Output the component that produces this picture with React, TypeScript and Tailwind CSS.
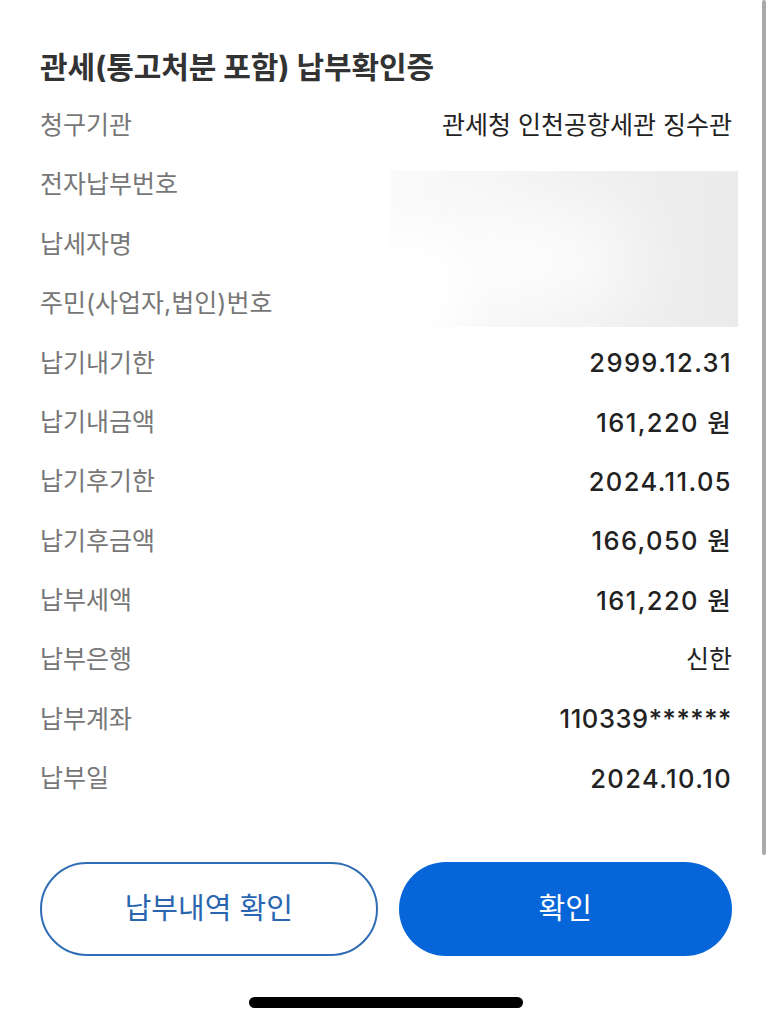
import React from 'react'

const rowsTop = [{ label: '청구기관', value: '관세청 인천공항세관 징수관' }]
const hidden = ['전자납부번호', '납세자명', '주민(사업자,법인)번호']
const rowsBottom = [
    { label: '납기내기한', value: '2999.12.31' },
    { label: '납기내금액', value: '161,220 원' },
    { label: '납기후기한', value: '2024.11.05' },
    { label: '납기후금액', value: '166,050 원' },
    { label: '납부세액', value: '161,220 원' },
    { label: '납부은행', value: '신한' },
    { label: '납부계좌', value: '110339******' },
    { label: '납부일', value: '2024.10.10' },
]

function Row({ label, value, plain }: { label: string; value: string; plain?: boolean }) {
    return (
        <div className="flex h-[59.4px] items-center justify-between">
            <span className="text-[25px] text-[#777]">{label}</span>
            {plain ? (
                <span className="text-[25px] text-[#222]">{value}</span>
            ) : value.includes('*') ? (
                <span className="text-[25.5px] font-medium tracking-[0.6px] text-[#222]">{value}</span>
            ) : (
                <span className="text-[25.5px] font-medium tracking-[1.4px] text-[#222]">{value}</span>
            )}
        </div>
    )
}

export default function App() {
    return (
        <div
            className="relative h-[1024px] w-[773px] overflow-hidden bg-white"
            style={{ fontFamily: 'Inter, "Noto Sans CJK KR", sans-serif' }}
        >
            {/* scroll indicator */}
            <div className="absolute right-[7px] top-0 h-[855px] w-[4px] rounded-full bg-[#a9a9a9]" />

            <div className="flex flex-col pl-[40px] pr-[41px] pt-[47px]">
                {/* Title */}
                <h1 className="h-[40px] text-[30px] font-bold leading-[40px] tracking-[-0.1px] text-[#333]">
                    관세(통고처분 포함) 납부확인증
                </h1>

                <div className="mt-[9px] flex flex-col">
                    {rowsTop.map((r) => (
                        <Row key={r.label} {...r} plain />
                    ))}

                    {/* masked rows */}
                    <div className="grid grid-cols-[1fr_342px]">
                        <div className="flex flex-col">
                            {hidden.map((l) => (
                                <div key={l} className="flex h-[59.4px] items-center">
                                    <span className="text-[25px] text-[#777]">{l}</span>
                                </div>
                            ))}
                        </div>
                        <div className="relative mb-[7px] mr-[-6px] mt-[16px] overflow-hidden bg-linear-to-r from-[#fbfbfb] via-[#f1f1f1] to-[#ebebeb]">
                            <div className="absolute left-[40px] top-[50px] h-[80px] w-[200px] rounded-full bg-white blur-2xl" />
                            <div className="absolute left-[-40px] top-[60px] h-[120px] w-[120px] rounded-full bg-white blur-xl" />
                        </div>
                    </div>

                    {rowsBottom.map((r) => (
                        <Row key={r.label} {...r} plain={r.value === '신한'} />
                    ))}
                </div>

                {/* Buttons */}
                <div className="mt-[53px] flex gap-[21px]">
                    <button className="flex h-[94px] flex-1 items-center justify-center rounded-full border-2 border-[#2f6db6] text-[29px] text-[#2a66b0]">
                        납부내역 확인
                    </button>
                    <button className="flex h-[94px] flex-1 items-center justify-center rounded-full bg-[#0665d8] text-[29px] text-white">
                        확인
                    </button>
                </div>

                {/* Home indicator */}
                <div className="mt-[41px] flex justify-center">
                    <div className="h-[11px] w-[274px] rounded-full bg-black" />
                </div>
            </div>
        </div>
    )
}
